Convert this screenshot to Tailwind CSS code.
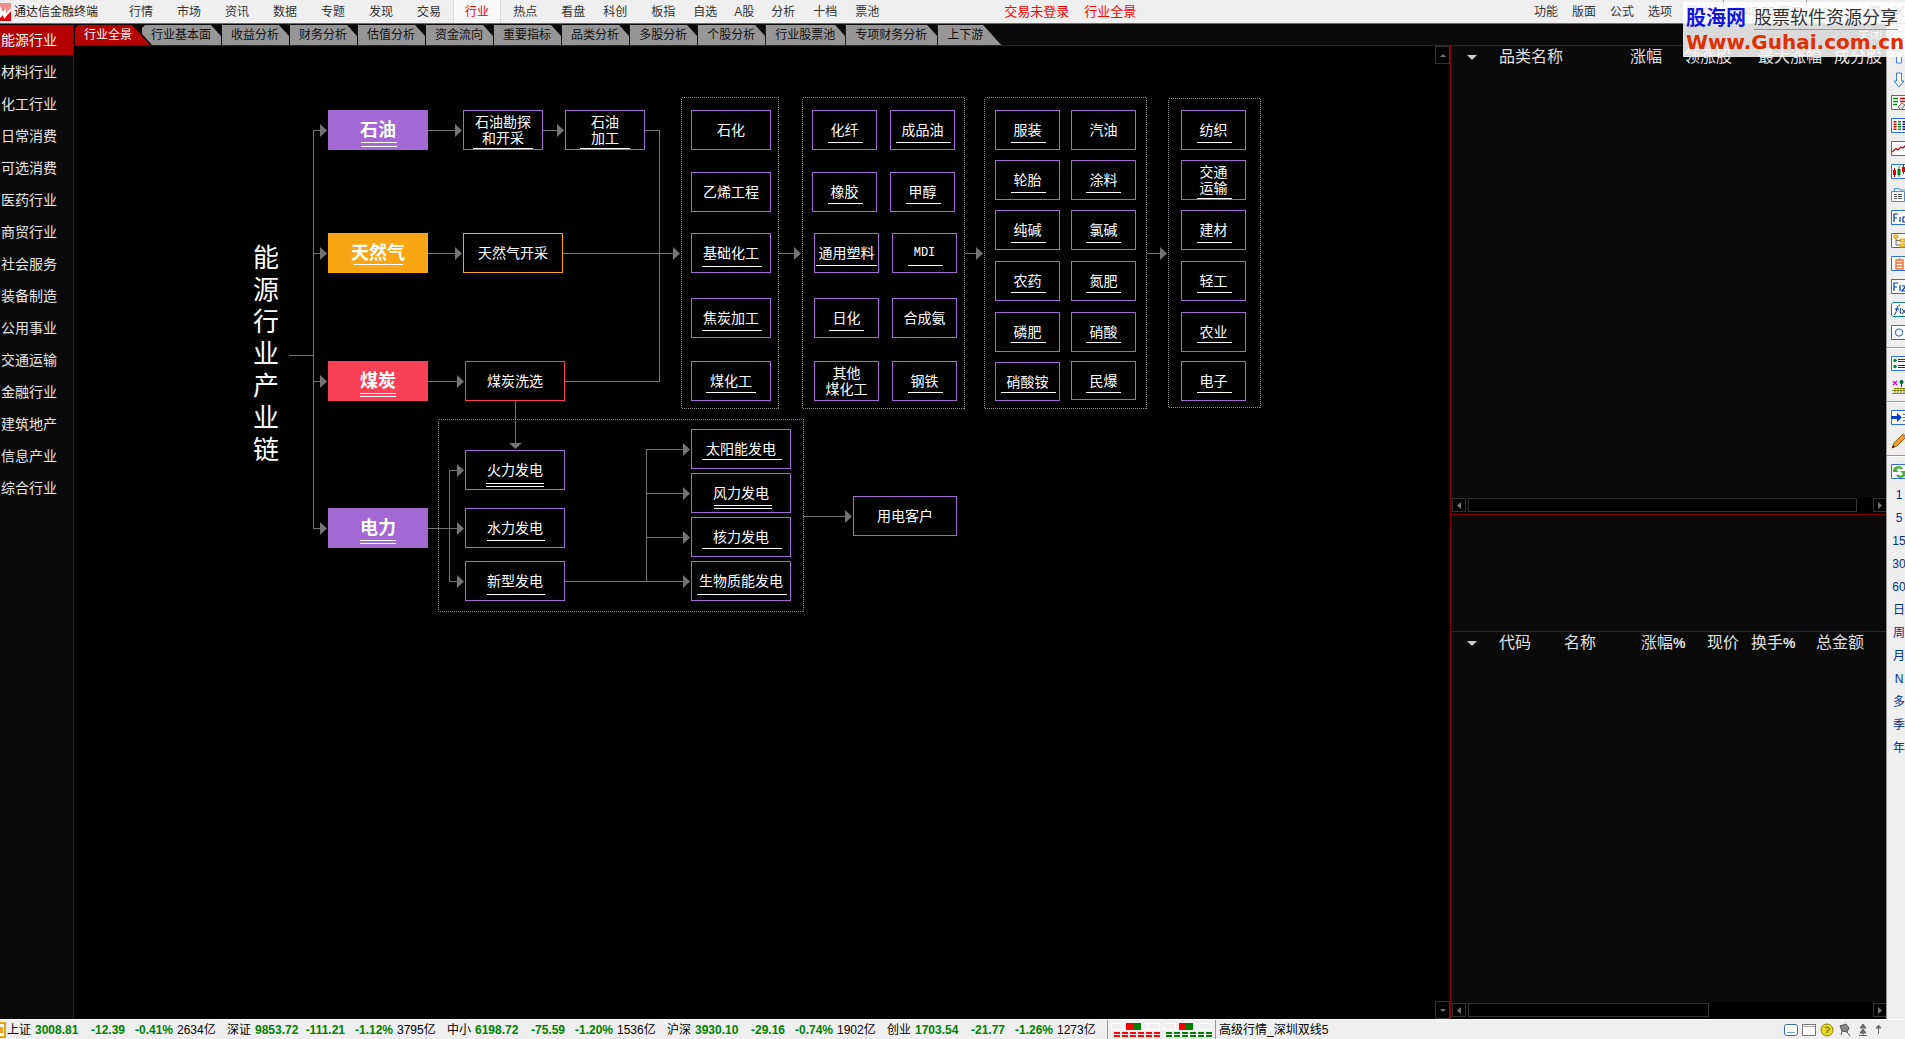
<!DOCTYPE html>
<html lang="zh-CN">
<head>
<meta charset="utf-8">
<title>通达信金融终端</title>
<script src="https://cdn.jsdelivr.net/npm/@tailwindcss/browser@4"></script>
</head>
<body class="relative flex h-screen flex-col overflow-hidden bg-black font-['Liberation_Sans','Noto_Sans_CJK_SC',sans-serif] text-[12px] leading-4 text-[#333]">

<!-- menu bar -->
<header class="flex h-6 shrink-0 items-stretch border-b border-[#6b6b6b] bg-[#efefef]">
  <div class="flex w-[117px] items-center gap-[3px] whitespace-nowrap text-[#222]">
    <svg class="h-5 w-[11px]" viewBox="0 0 11 20" aria-hidden="true"><path d="M0 1H11V19H0z" fill="#e00010"/><path d="M0 1H11V6L6 12 0 9z" fill="#f28a8a"/><path d="M0 4L3 10 6 6 6 11 11 6V9L4 17 3 13 0 16z" fill="#fff"/></svg>
    <span>通达信金融终端</span>
  </div>
  <nav class="flex items-stretch whitespace-nowrap">
    <button class="px-3">行情</button><button class="px-3">市场</button><button class="px-3">资讯</button><button class="px-3">数据</button><button class="px-3">专题</button><button class="px-3">发现</button><button class="px-3">交易</button><button class="border-x border-[#dcdcdc] bg-[#f8f8f8] px-[11px] text-[#f00]">行业</button><button class="px-3">热点</button><button class="px-3">看盘</button><button class="pr-3 pl-[6px]">科创</button><button class="pr-[9px] pl-3">板指</button><button class="px-[9px]">自选</button><button class="px-2">A股</button><button class="px-[9px]">分析</button><button class="px-[9px]">十档</button><button class="px-[9px]">票池</button>
  </nav>
  <div class="flex items-center gap-[15px] pl-[116px] text-[13px] whitespace-nowrap text-[#f00]"><a href="#login">交易未登录</a><a href="#pan">行业全景</a></div>
  <div class="ml-auto flex items-stretch whitespace-nowrap">
    <button class="px-[7px]">功能</button><button class="px-[7px]">版面</button><button class="px-[7px]">公式</button><button class="px-[7px]">选项</button><button class="pr-[13px] pl-[7px]">帮助</button>
    <div class="flex w-[84px] items-center border-x border-[#999] pl-1">19:45:55 周二</div>
    <div class="flex w-[98px] items-center justify-between pl-3">
      <svg class="size-3" viewBox="0 0 12 12" fill="none" stroke="#555" stroke-width="1.5" aria-hidden="true"><path d="M8 1L3 6 8 11"/></svg>
      <svg class="size-3" viewBox="0 0 12 12" fill="none" stroke="#555" stroke-width="1.5" aria-hidden="true"><path d="M1 10H11"/></svg>
      <svg class="size-3" viewBox="0 0 12 12" fill="none" stroke="#555" stroke-width="1.5" aria-hidden="true"><path d="M1 4H8V11H1zM4 4V1H11V8H8"/></svg>
      <svg class="size-3" viewBox="0 0 12 12" fill="none" stroke="#555" stroke-width="1.5" aria-hidden="true"><path d="M1 1L11 11M11 1L1 11"/></svg>
    </div>
  </div>
</header>

<div class="flex min-h-0 flex-1">
  <!-- industries -->
  <nav class="flex w-[74px] shrink-0 flex-col bg-[#0a0a0a] pt-px text-[14px] text-[#e6e6e6]">
    <div class="flex flex-1 flex-col gap-0.5 border-r border-[#800000] whitespace-nowrap">
      <button class="h-[30px] bg-[#b40000] pl-px text-left text-white">能源行业</button>
      <button class="h-[30px] pl-px text-left">材料行业</button>
      <button class="h-[30px] pl-px text-left">化工行业</button>
      <button class="h-[30px] pl-px text-left">日常消费</button>
      <button class="h-[30px] pl-px text-left">可选消费</button>
      <button class="h-[30px] pl-px text-left">医药行业</button>
      <button class="h-[30px] pl-px text-left">商贸行业</button>
      <button class="h-[30px] pl-px text-left">社会服务</button>
      <button class="h-[30px] pl-px text-left">装备制造</button>
      <button class="h-[30px] pl-px text-left">公用事业</button>
      <button class="h-[30px] pl-px text-left">交通运输</button>
      <button class="h-[30px] pl-px text-left">金融行业</button>
      <button class="h-[30px] pl-px text-left">建筑地产</button>
      <button class="h-[30px] pl-px text-left">信息产业</button>
      <button class="h-[30px] pl-px text-left">综合行业</button>
    </div>
  </nav>

  <div class="flex min-w-0 flex-1 flex-col">
    <!-- tabs -->
    <div class="flex h-[22px] shrink-0 items-end border-b border-[#800000] bg-[#0a0a0a] pl-px text-[12px] leading-[21px] whitespace-nowrap text-[#111]">
      <button class="relative z-10 h-5 bg-[#0a0a0a] pr-0.5 [clip-path:polygon(0_0,calc(100%-18px)_0,100%_100%,0_100%)]"><span class="block h-5 bg-[#b40000] pr-[18px] pl-[9px] leading-[21px] text-white [clip-path:polygon(0_3px,3px_0,calc(100%-18px)_0,100%_100%,0_100%)]">行业全景</span></button>
      <button class="-ml-[10px] h-5 bg-[#969696] pr-[18px] pl-[9px] [clip-path:polygon(0_3px,3px_0,calc(100%-18px)_0,100%_100%,0_100%)]">行业基本面</button>
      <button class="-ml-2 h-5 border-l border-[#0a0a0a] bg-[#969696] pr-[18px] pl-[9px] [clip-path:polygon(0_0,calc(100%-18px)_0,100%_100%,0_100%)]">收益分析</button>
      <button class="-ml-2 h-5 border-l border-[#0a0a0a] bg-[#969696] pr-[18px] pl-[9px] [clip-path:polygon(0_0,calc(100%-18px)_0,100%_100%,0_100%)]">财务分析</button>
      <button class="-ml-2 h-5 border-l border-[#0a0a0a] bg-[#969696] pr-[18px] pl-[9px] [clip-path:polygon(0_0,calc(100%-18px)_0,100%_100%,0_100%)]">估值分析</button>
      <button class="-ml-2 h-5 border-l border-[#0a0a0a] bg-[#969696] pr-[18px] pl-[9px] [clip-path:polygon(0_0,calc(100%-18px)_0,100%_100%,0_100%)]">资金流向</button>
      <button class="-ml-2 h-5 border-l border-[#0a0a0a] bg-[#969696] pr-[18px] pl-[9px] [clip-path:polygon(0_0,calc(100%-18px)_0,100%_100%,0_100%)]">重要指标</button>
      <button class="-ml-2 h-5 border-l border-[#0a0a0a] bg-[#969696] pr-[18px] pl-[9px] [clip-path:polygon(0_0,calc(100%-18px)_0,100%_100%,0_100%)]">品类分析</button>
      <button class="-ml-2 h-5 border-l border-[#0a0a0a] bg-[#969696] pr-[18px] pl-[9px] [clip-path:polygon(0_0,calc(100%-18px)_0,100%_100%,0_100%)]">多股分析</button>
      <button class="-ml-2 h-5 border-l border-[#0a0a0a] bg-[#969696] pr-[18px] pl-[9px] [clip-path:polygon(0_0,calc(100%-18px)_0,100%_100%,0_100%)]">个股分析</button>
      <button class="-ml-2 h-5 border-l border-[#0a0a0a] bg-[#969696] pr-[18px] pl-[9px] [clip-path:polygon(0_0,calc(100%-18px)_0,100%_100%,0_100%)]">行业股票池</button>
      <button class="-ml-2 h-5 border-l border-[#0a0a0a] bg-[#969696] pr-[18px] pl-[9px] [clip-path:polygon(0_0,calc(100%-18px)_0,100%_100%,0_100%)]">专项财务分析</button>
      <button class="-ml-2 h-5 border-l border-[#0a0a0a] bg-[#969696] pr-[18px] pl-[9px] [clip-path:polygon(0_0,calc(100%-18px)_0,100%_100%,0_100%)]">上下游</button>
      <button class="mr-1 ml-auto h-5 text-[#ddd]">关闭</button>
    </div>

    <div class="flex min-h-0 flex-1">
      <!-- chain diagram -->
      <main id="chain" class="relative min-w-0 flex-1 overflow-hidden bg-black">
        <svg class="absolute top-0 left-0 h-[600px] w-[1200px]" viewBox="74 46 1200 600" fill="none" shape-rendering="crispEdges" aria-hidden="true">
          <g stroke="#8a8a8a" stroke-dasharray="1 1">
            <rect x="681.5" y="97.5" width="97" height="311"/>
            <rect x="802.5" y="97.5" width="162" height="311"/>
            <rect x="984.5" y="97.5" width="162" height="311"/>
            <rect x="1168.5" y="98.5" width="92" height="309"/>
            <rect x="438.5" y="419.5" width="365" height="192"/>
          </g>
          <path stroke="#737373" d="M289 355.5H313M313.5 130V528M313 130.5H320M313 253.5H320M313 381.5H320M313 528.5H320M428 130.5H455M543 130.5H557M645 130.5H660M659.5 130V381M565 381.5H660M428 253.5H455M563 253.5H673M428 381.5H457M515.5 401V443M428 528.5H457M449.5 470V581M449 470.5H457M449 581.5H457M565 581.5H683M646.5 449V581M646 449.5H683M646 493.5H683M646 537.5H683M803 516.5H845M779 253.5H795M965 253.5H976M1147 253.5H1161"/>
          <path fill="#737373" shape-rendering="auto" d="M320 124l7 6.500-7 6.500zM320 247l7 6.500-7 6.500zM320 375l7 6.500-7 6.500zM320 522l7 6.500-7 6.500zM455 124l7 6.500-7 6.500zM557 124l7 6.500-7 6.500zM455 247l7 6.500-7 6.500zM457 375l7 6.500-7 6.500zM457 464l7 6.500-7 6.500zM457 522l7 6.500-7 6.500zM457 575l7 6.500-7 6.500zM683 443l7 6.500-7 6.500zM683 487l7 6.500-7 6.500zM683 531l7 6.500-7 6.500zM683 575l7 6.500-7 6.500zM845 510l7 6.500-7 6.500zM673 247l7 6.500-7 6.500zM794 247l7 6.500-7 6.500zM976 247l7 6.500-7 6.500zM1160 247l7 6.500-7 6.500zM509 443h13l-6.500 6z"/>
        </svg>
        <h1 class="absolute top-[196px] left-[178px] w-7 text-center text-[26px] leading-8 font-normal text-white">能源行业产业链</h1>
      </main>
      <!-- vertical scroll -->
      <div class="flex w-[15px] shrink-0 flex-col justify-between bg-black">
        <button class="flex h-[18px] w-[15px] items-center justify-center border border-[#333]" aria-label="向上"><svg class="h-[3px] w-[6px]" viewBox="0 0 6 3"><path d="M3 0L6 3H0z" fill="#777"/></svg></button>
        <button class="flex h-[18px] w-[15px] items-center justify-center border border-[#333]" aria-label="向下"><svg class="h-[3px] w-[6px]" viewBox="0 0 6 3"><path d="M3 3L6 0H0z" fill="#777"/></svg></button>
      </div>

      <!-- quote tables -->
      <aside class="flex w-[436px] shrink-0 flex-col border-l border-[#800000] bg-[#0a0a0a] text-[#e0e0e0]">
        <section class="flex h-[469px] flex-col justify-between border-b border-[#800000]">
          <table class="w-full table-fixed text-left text-[16px] leading-[22px] whitespace-nowrap">
            <colgroup><col class="w-12"><col class="w-[131px]"><col class="w-[54px]"><col class="w-[74px]"><col class="w-[76px]"><col></colgroup>
            <thead><tr>
              <th class="pl-4"><svg class="h-[5px] w-[10px]" viewBox="0 0 10 5" aria-label="排序"><path d="M0 0H10L5 5z" fill="#ccc"/></svg></th>
              <th class="font-normal">品类名称</th><th class="font-normal">涨幅</th><th class="font-normal">领涨股</th><th class="font-normal">最大涨幅</th><th class="font-normal">成分股</th>
            </tr></thead>
          </table>
          <div class="flex h-[17px] items-start gap-0.5 overflow-hidden bg-black pt-px pl-px">
            <button class="flex h-[14px] w-[14px] shrink-0 items-center justify-center border border-[#333]" aria-label="向左"><svg class="h-[7px] w-1" viewBox="0 0 4 7"><path d="M4 0V7L0 3.500z" fill="#777"/></svg></button>
            <div class="mr-[14px] h-[14px] flex-1 border border-[#333]"></div>
            <button class="-mr-px flex h-[14px] w-[14px] shrink-0 items-center justify-center border border-[#333]" aria-label="向右"><svg class="h-[7px] w-1" viewBox="0 0 4 7"><path d="M0 0V7L4 3.500z" fill="#777"/></svg></button>
          </div>
        </section>
        <section class="h-[117px] shrink-0 border-b border-[#800000]"></section>
        <section class="flex min-h-0 flex-1 flex-col justify-between">
          <table class="w-full table-fixed text-left text-[16px] leading-[22px] whitespace-nowrap">
            <colgroup><col class="w-12"><col class="w-[65px]"><col class="w-[77px]"><col class="w-[66px]"><col class="w-11"><col class="w-[65px]"><col></colgroup>
            <thead><tr>
              <th class="pl-4"><svg class="h-[5px] w-[10px]" viewBox="0 0 10 5" aria-label="排序"><path d="M0 0H10L5 5z" fill="#ccc"/></svg></th>
              <th class="font-normal">代码</th><th class="font-normal">名称</th><th class="font-normal">涨幅<b class="text-[14px]">%</b></th><th class="font-normal">现价</th><th class="font-normal">换手<b class="text-[14px]">%</b></th><th class="font-normal">总金额</th>
            </tr></thead>
          </table>
          <div class="flex h-[17px] shrink-0 items-start gap-0.5 overflow-hidden bg-black pt-px pl-px">
            <button class="flex h-[14px] w-[14px] shrink-0 items-center justify-center border border-[#333]" aria-label="向左"><svg class="h-[7px] w-1" viewBox="0 0 4 7"><path d="M4 0V7L0 3.500z" fill="#777"/></svg></button>
            <div class="h-[14px] w-[241px] border border-[#333]"></div>
            <button class="-mr-px ml-auto flex h-[14px] w-[14px] shrink-0 items-center justify-center border border-[#333]" aria-label="向右"><svg class="h-[7px] w-1" viewBox="0 0 4 7"><path d="M0 0V7L4 3.500z" fill="#777"/></svg></button>
          </div>
        </section>
      </aside>
    </div>
  </div>

  <!-- tool strip -->
  <nav class="w-[19px] shrink-0 overflow-hidden border-l border-[#999] bg-[#efefef] text-[12px] text-[#003090]">
    <div class="flex w-6 flex-col *:flex *:h-[23px] *:shrink-0 *:items-center *:justify-center">
      <button class="!h-[21px]" aria-label="后退"><svg class="h-4 w-4" viewBox="0 0 16 16" fill="#fff" stroke="#3b78e0"><path d="M1 8L7 2V5H15V11H7V14z"/></svg></button>
      <button aria-label="上移"><svg class="h-4 w-4" viewBox="0 0 16 16" fill="#fff" stroke="#3b78e0"><path d="M8 1L13 7H10.500V14H5.500V7H3z"/></svg></button>
      <button aria-label="下移"><svg class="h-4 w-4" viewBox="0 0 16 16" fill="#fff" stroke="#3b78e0"><path d="M8 15L3 9H5.500V1H10.500V9H13z"/></svg></button>
      <button aria-label="表格"><svg class="h-4 w-4" viewBox="0 0 16 16" fill="none"><path d="M.5 .5H19V14.500H.5z" fill="#fff" stroke="#2c6fe0"/><path d="M2 3.500H7M2 6.500H7M2 9.500H6" stroke="#0a8a1a" stroke-width="1.500"/><path d="M9 3.500H15M9 6.500H15" stroke="#d00" stroke-width="1.500"/><path d="M7 12l4-4 3 2-4 5z" fill="#ddd" stroke="#777"/></svg></button>
      <button aria-label="报价"><svg class="h-4 w-4" viewBox="0 0 16 16" fill="none"><path d="M.5 .5H19V14.500H.5z" fill="#fff" stroke="#2c6fe0"/><g stroke-width="3" stroke-dasharray="1.500 1"><path d="M4 3V13" stroke="#d00"/><path d="M8.500 3V13" stroke="#0a8a1a"/><path d="M13 3V13" stroke="#00c"/></g></svg></button>
      <button aria-label="分时"><svg class="h-4 w-4" viewBox="0 0 16 16" fill="none"><path d="M.5 .5H19V14.500H.5z" fill="#fff" stroke="#2c6fe0"/><path d="M1 11L5 7.500 7 9 10 6 12 7 16 3" stroke="#d00" stroke-width="1.300"/></svg></button>
      <button aria-label="K线"><svg class="h-4 w-4" viewBox="0 0 16 16" fill="none"><path d="M.5 .5H19V14.500H.5z" fill="#fff" stroke="#2c6fe0"/><path d="M3.500 4V13M12.500 1V10" stroke="#d00"/><path d="M8 2V13" stroke="#0a7a1a"/><path d="M2 6h3v5H2zM11 3h3v5H11z" fill="#d00"/><path d="M6.500 5h3v6H6.500z" fill="#0a7a1a"/></svg></button>
      <button aria-label="资讯"><svg class="h-4 w-4" viewBox="0 0 16 16" fill="#fff" stroke="#4a8ae8"><path d="M3.500 4V1.500H8L9 3H17V12H14M.5 4.500H13.500V14.500H.5z"/><path d="M3 7.500H6M7 7.500H11M3 9.500H6M7 9.500H11M3 11.500H6M7 11.500H11" stroke="#555"/></svg></button>
      <button aria-label="F10"><svg class="h-4 w-4" viewBox="0 0 16 16" fill="none"><path d="M.5 .5H19V14.500H.5z" fill="#fff" stroke="#2c6fe0"/><path d="M3 12V4H7M3 8H6M9 7V12M12 7H15V12H12z" stroke="#0033b0" stroke-width="1.200"/></svg></button>
      <button aria-label="板块"><svg class="h-4 w-4" viewBox="0 0 16 16" fill="none"><path d="M.5 .5H19V14.500H.5z" fill="#fff" stroke="#2c6fe0"/><path d="M5 5V12H9M5 7.500H9" stroke="#666"/><path d="M3 2h4v3H3zM9 6h5v3H9zM9 11h5v3H9z" fill="#ffd24a" stroke="#e0a010"/></svg></button>
      <button aria-label="自选"><svg class="h-4 w-4" viewBox="0 0 16 16" fill="none"><path d="M.5 .5H19V14.500H.5z" fill="#fff" stroke="#2c6fe0"/><path d="M5 4H12V13H5zM5 7H12M5 10H12M9 2L8 4" stroke="#f07030" stroke-width="1.400"/></svg></button>
      <button aria-label="F12"><svg class="h-4 w-4" viewBox="0 0 16 16" fill="none"><path d="M.5 .5H19V14.500H.5z" fill="#fff" stroke="#2c6fe0"/><path d="M3 12V4H7M3 8H6M9 6V12M11 7H15L11 12H16" stroke="#0033b0" stroke-width="1.200"/></svg></button>
      <button aria-label="公式"><svg class="h-4 w-4" viewBox="0 0 16 16" fill="none"><path d="M2 .5H19V14.500H2L.5 13V2z" fill="#fff" stroke="#108080"/><path d="M3 13C6 12 5 3 9 3M4 7H8M10 6Q8 9 10 12M11 7L15 12M15 7L11 12" stroke="#0033b0"/></svg></button>
      <button aria-label="圆"><svg class="h-4 w-4" viewBox="0 0 16 16" fill="none"><path d="M.5 .5H19V14.500H.5z" fill="#fff" stroke="#2c6fe0"/><circle cx="8" cy="7.500" r="3.700" stroke="#1060d0"/></svg></button>
      <hr class="my-[3px] !h-0.5 border-t border-b border-t-[#999] border-b-white">
      <button aria-label="列表"><svg class="h-4 w-4" viewBox="0 0 16 16" fill="none"><path d="M.5 .5H19V14.500H.5z" fill="#fff" stroke="#2c6fe0"/><circle cx="4" cy="4.500" r="1.800" fill="#084"/><circle cx="4" cy="10.500" r="1.800" fill="#084"/><path d="M7 3.500H15M7 5.500H15M7 9.500H15M7 11.500H15" stroke="#333"/></svg></button>
      <button aria-label="工具"><svg class="h-4 w-4" viewBox="0 0 16 16" fill="none"><path d="M2 2L6 6M6 2L2 6" stroke="#d0c" stroke-width="1.300"/><circle cx="10.500" cy="3" r="2" fill="#063"/><path d="M10.500 4V8" stroke="#063"/><path d="M3 9.500H16M1 11.500H16M1 14.500H16M4 9V15M7 9V15M10 9V15M13 9V15" stroke="#8a8a10"/></svg></button>
      <hr class="my-[3px] !h-0.5 border-t border-b border-t-[#999] border-b-white">
      <button aria-label="转到"><svg class="h-4 w-4" viewBox="0 0 16 16" fill="none"><path d="M.5 .5H19V14.500H.5z" fill="#fff" stroke="#2c6fe0"/><path d="M0 6H6V3L11 7.500 6 12V9H0z" fill="#0040d0"/><path d="M12 4.500H16M12 7.500H16M12 10.500H16" stroke="#2c6fe0"/></svg></button>
      <button aria-label="画笔"><svg class="h-4 w-4" viewBox="0 0 16 16"><path d="M1 15L3 10 12 1 15 4 6 13z" fill="#f0a030" stroke="#a86010"/><path d="M11 2L12.500 .5 15.500 3.500 14 5z" fill="#c08080"/><path d="M1 15L2 12 4 14z" fill="#222"/></svg></button>
      <hr class="my-[3px] !h-0.5 border-t border-b border-t-[#999] border-b-white">
      <button aria-label="刷新"><svg class="h-4 w-4" viewBox="0 0 16 16" fill="none"><path d="M.5 .5H19V14.500H.5z" fill="#fff" stroke="#2c6fe0"/><path d="M3 8A4.500 4.500 0 0 1 11 5M14 8A4.500 4.500 0 0 1 6 11" stroke="#4cae3c" stroke-width="2.500"/><path d="M3 3V8H8zM14 12V7H9z" fill="#4cae3c"/></svg></button>
      <button>1</button><button>5</button><button>15</button><button>30</button><button>60</button><button>日</button><button>周</button><button>月</button><button>N</button><button>多</button><button>季</button><button>年</button>
    </div>
  </nav>
</div>

<!-- status bar -->
<footer class="flex h-5 shrink-0 items-center border-t border-white bg-[#efefef] whitespace-nowrap text-black">
  <svg class="h-4 w-[6px]" viewBox="0 0 6 16" aria-hidden="true"><path d="M0 1H5V15H0" fill="#fff" stroke="#e8a010" stroke-width="2"/><path d="M0 5H3V11H0z" fill="#f0a020"/></svg>
  <dl id="quotes" class="flex pl-px"></dl>
  <div class="flex h-full items-center border-x border-[#999] pr-0.5 pl-[3px]">
    <svg class="h-4 w-[102px]" viewBox="0 0 102 16" shape-rendering="crispEdges" aria-label="行情强弱"><g fill="none" stroke="#fff"><path d="M.5 1.500H48.500V7.500H.5zM12.500 1V8M36.500 1V8M52.500 1.500H100.500V7.500H52.500zM64.500 1V8M88.500 1V8"/></g><path d="M15 1h8v7h-8zM68 1h7v7h-7z" fill="#f00"/><path d="M23 1h7v7h-7zM75 1h7v7h-7z" fill="#008000"/><g fill="none" stroke-width="2" stroke-dasharray="6 2"><path d="M3 11H49M3 14H49" stroke="#f00"/><path d="M55 11H101M55 14H101" stroke="#008000"/></g></svg>
  </div>
  <span class="pl-[3px]">高级行情_深圳双线5</span>
  <div class="ml-auto flex items-center gap-1 pr-[22px]">
    <svg class="size-[14px]" viewBox="0 0 14 14" aria-hidden="true"><rect x=".5" y="1.500" width="13" height="11" rx="2" fill="#fff" stroke="#3a6ea8"/><path d="M3 9.500H11" stroke="#7ab"/></svg>
    <svg class="size-[14px]" viewBox="0 0 14 14" aria-hidden="true"><rect x=".5" y="1.500" width="13" height="11" fill="#fff" stroke="#777"/><path d="M1 3.500H13" stroke="#aaa"/></svg>
    <svg class="size-[14px]" viewBox="0 0 14 14" aria-hidden="true"><circle cx="7" cy="7" r="6" fill="#e8d820" stroke="#8a8000"/><path d="M5 5Q7 3 9 5T7 8V10" fill="none" stroke="#555"/></svg>
    <svg class="size-[14px]" viewBox="0 0 14 14" aria-hidden="true"><path d="M2 3L8 1 11 5 9 9 4 8zM9 9L12 13M4 8L3 12" fill="#888" stroke="#555"/></svg>
    <svg class="size-[14px]" viewBox="0 0 14 14" aria-hidden="true"><path d="M4 5L7 1 10 5zM4 10L7 6 10 10zM3 12.500H11M7 9V12" fill="#666" stroke="#666"/></svg>
    <svg class="h-[14px] w-[9px]" viewBox="0 0 9 14" aria-hidden="true"><path d="M2 5L4.500 2 7 5zM4.500 5V11" fill="#666" stroke="#666"/></svg>
  </div>
</footer>

<!-- promotional badge over the top right corner -->
<a href="#guhai" class="absolute top-0.5 right-0 z-20 flex h-[55px] w-[222px] flex-col bg-white/85 pt-1 pl-[3px] whitespace-nowrap">
  <span class="flex h-6 items-center gap-2"><b class="text-[20px] leading-6 text-[#1414e0]">股海网</b><span class="border-b border-[#999] text-[18px] leading-[22px] text-[#333]">股票软件资源分享</span></span>
  <b class="font-['DejaVu_Sans',sans-serif] text-[20px] leading-6 text-[#e03000]">Www.Guhai.com.cn</b>
</a>

<script>
  // Diagram nodes: left, top, width, height, style, label, underline left, width, y (second y when doubled).
  const nodes = [
    [328,110,100,40,'purple','石油',361,36,142,146],[328,233,100,40,'amber','天然气',353,50,264],[328,361,100,40,'red','煤炭',360,36,393,396],[328,508,100,40,'purple','电力',360,36,540,543],
    [463,110,80,40,'line','石油勘探\n和开采',473,60,148],[565,110,80,40,'line','石油\n加工',580,50,148],
    [463,233,100,40,'amberLine','天然气开采'],[465,361,100,40,'redLine','煤炭洗选'],
    [691,110,80,40,'line','石化'],[691,172,80,40,'line','乙烯工程'],[691,233,80,40,'line','基础化工',702,60,266],[691,298,80,40,'line','焦炭加工',702,60,330],[691,361,80,40,'line','煤化工',706,50,392],
    [812,110,65,40,'line','化纤',828,35,142],[890,110,65,40,'line','成品油',896,55,142],
    [812,172,65,40,'line','橡胶',828,35,203],[890,172,65,40,'line','甲醇',906,35,203],
    [814,233,65,40,'line','通用塑料',816,61,265],[892,233,65,40,'latin','MDI',908,35,265],
    [814,298,65,40,'line','日化',829,35,330],[892,298,65,40,'line','合成氨'],
    [814,361,65,40,'line','其他\n煤化工'],[892,361,65,40,'line','钢铁',908,35,392],
    [995,110,65,40,'line','服装',1011,35,142],[1071,110,65,40,'line','汽油'],
    [995,160,65,40,'line','轮胎',1011,35,192],[1071,160,65,40,'line','涂料',1086,35,192],
    [995,210,65,40,'line','纯碱',1011,35,242],[1071,210,65,40,'line','氯碱',1086,35,242],
    [995,261,65,40,'line','农药',1011,35,292],[1071,261,65,40,'line','氮肥',1086,35,292],
    [995,312,65,40,'line','磷肥',1011,35,342],[1071,312,65,40,'line','硝酸',1086,35,342],
    [995,362,65,39,'line','硝酸铵',1001,55,392],[1071,361,65,39,'line','民爆',1086,35,392],
    [1181,110,65,40,'line','纺织',1197,35,142],[1181,160,65,40,'line','交通\n运输',1197,35,198],[1181,210,65,40,'line','建材',1197,35,242],
    [1181,261,65,40,'line','轻工',1197,35,292],[1181,312,65,40,'line','农业',1197,35,342],[1181,361,65,40,'line','电子',1197,35,392],
    [465,450,100,40,'line','火力发电',486,58,483,486],[465,508,100,40,'line','水力发电',487,58,540],[465,561,100,40,'line','新型发电',487,58,594],
    [691,429,100,40,'line','太阳能发电',702,80,459],[691,473,100,40,'line','风力发电',714,58,505,508],[691,517,100,40,'line','核力发电',702,80,548],[691,561,100,40,'line','生物质能发电',697,90,594],
    [853,496,104,40,'line','用电客户']
  ];
  const looks = {
    purple: 'bg-[#a468d4] text-[18px] font-bold',
    amber: 'bg-[#faa614] text-[18px] font-bold',
    red: 'bg-[#fa4056] text-[18px] font-bold',
    line: 'border border-[#a468d4] text-[14px]',
    latin: "border border-[#a468d4] font-['Liberation_Mono',monospace] text-[12px]",
    amberLine: 'border border-[#faa614] text-[14px]',
    redLine: 'border border-[#fa4056] text-[14px]'
  };
  const originX = 74, originY = 46;
  const chain = document.getElementById('chain');
  const place = (el, x, y, w, h) => {
    el.style.left = x - originX + 'px'; el.style.top = y - originY + 'px';
    el.style.width = w + 'px'; el.style.height = h + 'px';
    chain.append(el);
  };
  for (const [x, y, w, h, look, label, ux, uw, ...ys] of nodes) {
    const el = document.createElement(ux ? 'a' : 'div');
    if (ux) el.href = '#' + label.replace('\n', '');
    el.className = 'absolute flex items-center justify-center text-center leading-4 whitespace-pre text-white ' + looks[look];
    el.textContent = label;
    place(el, x, y, w, h);
    for (const uy of ys) {
      const u = document.createElement('span');
      u.className = 'pointer-events-none absolute bg-white';
      place(u, ux, uy, uw, 1);
    }
  }

  const quotes = [
    ['上证','3008.81','-12.39','-0.41%','2634亿'],['深证','9853.72','-111.21','-1.12%','3795亿'],['中小','6198.72','-75.59','-1.20%','1536亿'],
    ['沪深','3930.10','-29.16','-0.74%','1902亿'],['创业','1703.54','-21.77','-1.26%','1273亿']
  ];
  document.getElementById('quotes').innerHTML = quotes.map(q => `<div class="flex w-[220px] items-center">
    <dt class="w-7">${q[0]}</dt><dd class="w-[46px] font-bold text-[#008000]">${q[1]}</dd><dd class="w-[44px] text-right font-bold text-[#008000]">${q[2]}</dd><dd class="w-12 text-right font-bold text-[#008000]">${q[3]}</dd><dd class="pl-1">${q[4]}</dd></div>`).join('');
</script>
</body>
</html>
